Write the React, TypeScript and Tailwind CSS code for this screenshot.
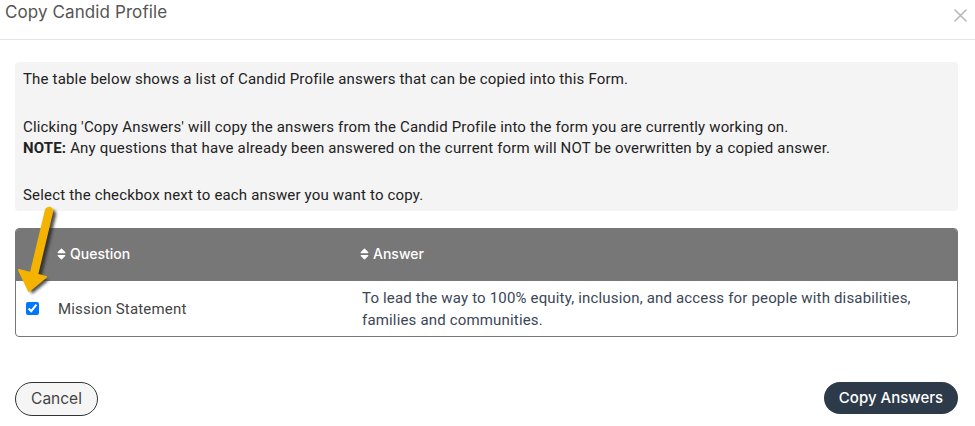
import React from "react";

function SortIcon() {
  return (
    <svg viewBox="0 0 320 512" className="w-[9px] h-[14px] fill-white shrink-0" aria-hidden>
      <path d="M41 288h238c21.4 0 32.1 25.9 17 41L177 448c-9.4 9.4-24.6 9.4-33.9 0L24 329c-15.1-15.1-4.4-41 17-41zm255-105L177 64c-9.4-9.4-24.6-9.4-33.9 0L24 183c-15.1 15.1-4.4 41 17 41h238c21.4 0 32.1-25.9 17-41z" />
    </svg>
  );
}

function Arrow() {
  return (
    <svg
      className="absolute left-0 top-0 pointer-events-none"
      width="80"
      height="300"
      viewBox="0 0 80 300"
      aria-hidden
    >
      <defs>
        <filter id="sh" x="-50%" y="-50%" width="200%" height="200%">
          <feGaussianBlur stdDeviation="1.8" />
        </filter>
      </defs>
      <g transform="translate(3,3)" filter="url(#sh)" opacity="0.8">
        <line x1="49" y1="211" x2="34" y2="274" stroke="#222" strokeWidth="8.5" strokeLinecap="round" />
        <polygon points="19,270 46,277 29,291" fill="#222" />
      </g>
      <line x1="49" y1="211" x2="34" y2="274" stroke="#F5B301" strokeWidth="8.5" strokeLinecap="round" />
      <polygon points="19,270 46,277 29,291" fill="#F5B301" stroke="#F5B301" strokeWidth="2" strokeLinejoin="round" />
    </svg>
  );
}

export default function App() {
  return (
    <div className="relative w-[975px] h-[426px] bg-white overflow-hidden font-['Roboto',sans-serif]">
      <div className="h-[40px] border-b border-[#e5e5e5] flex items-start justify-between">
        <div className="pl-[5px] pt-[1px] text-[17px] leading-[22px] text-[#555] font-['Inter',sans-serif] tracking-[0.1px]">
          Copy Candid Profile
        </div>
        <svg className="mt-[9px] mr-[8px]" width="13" height="13" viewBox="0 0 13 13" aria-hidden>
          <path d="M1 1L12 12M12 1L1 12" stroke="#b8b8b8" strokeWidth="1.6" strokeLinecap="round" />
        </svg>
      </div>

      <div className="px-[15px] pt-[22px] pr-[17px]">
        <div className="bg-[#f4f4f4] rounded-[4px] pl-[8px] pt-[7px] pb-[5px] text-[15px] tracking-[0.17px] leading-[21px] text-[#222]">
          <p>The table below shows a list of Candid Profile answers that can be copied into this Form.</p>
          <p className="mt-[27px]">
            Clicking 'Copy Answers' will copy the answers from the Candid Profile into the form you are currently working on.
          </p>
          <p>
            <span className="font-bold">NOTE:</span> Any questions that have already been answered on the current form will NOT be overwritten by a copied answer.
          </p>
          <p className="mt-[26px]">Select the checkbox next to each answer you want to copy.</p>
        </div>

        <div className="mt-[17px] rounded-[4px] border border-[#777] overflow-hidden">
          <div className="grid grid-cols-[32px_303px_1fr] h-[52px] pb-[3px] bg-[#777] text-white text-[14px] font-medium font-['Inter',sans-serif] items-center">
            <div />
            <div className="pl-[9px] flex items-center gap-[4px]">
              <SortIcon />
              <span>Question</span>
            </div>
            <div className="pl-[9px] flex items-center gap-[4px]">
              <SortIcon />
              <span>Answer</span>
            </div>
          </div>
          <div className="grid grid-cols-[32px_303px_1fr] h-[55px] items-center text-[15px] tracking-[0.17px] leading-[22px]">
            <div className="pl-[10px] flex items-center">
              <input type="checkbox" defaultChecked className="w-[13px] h-[13px] m-0" />
            </div>
            <div className="pl-[10px] text-[#444]">Mission Statement</div>
            <div className="pl-[11px] pr-[20px] text-[#3b4656]">
              To lead the way to 100% equity, inclusion, and access for people with disabilities, families and communities.
            </div>
          </div>
        </div>

        <div className="mt-[45px] flex items-start justify-between">
          <button className="w-[83px] h-[34px] rounded-full border border-[#333] bg-[#f5f5f5] text-[15.5px] text-[#444] font-['Inter',sans-serif]">
            Cancel
          </button>
          <button className="w-[134px] h-[32px] rounded-full bg-[#2d3a4a] text-[15px] text-white font-['Inter',sans-serif] font-medium">
            Copy Answers
          </button>
        </div>
      </div>

      <Arrow />
    </div>
  );
}
